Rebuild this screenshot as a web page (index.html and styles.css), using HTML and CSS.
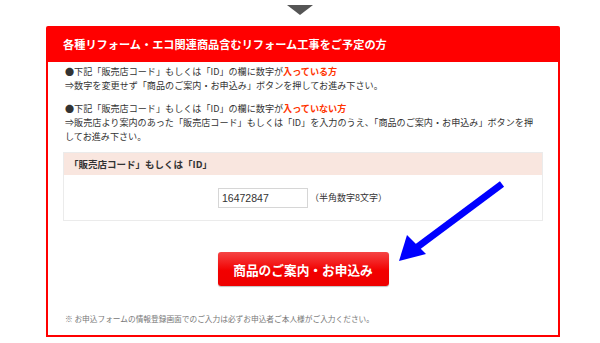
FILE: index.html
```html
<!DOCTYPE html>
<html lang="ja">
<head>
<meta charset="utf-8">
<title>リフォーム</title>
<link rel="stylesheet" href="styles.css">
</head>
<body>
<div class="page">
  <div class="down"></div>
  <div class="box">
    <div class="box-head">各種リフォーム・エコ関連商品含むリフォーム工事をご予定の方</div>
    <div class="box-body">
      <p class="para">●下記「販売店コード」もしくは「ID」の欄に数字が<span class="hl">入っている方</span><br>⇒数字を変更せず「商品のご案内・お申込み」ボタンを押してお進み下さい。</p>
      <p class="para">●下記「販売店コード」もしくは「ID」の欄に数字が<span class="hl">入っていない方</span><br>⇒販売店より案内のあった「販売店コード」もしくは「ID」を入力のうえ、「商品のご案内・お申込み」ボタンを押<br>してお進み下さい。</p>
      <div class="form">
        <div class="form-head">「販売店コード」もしくは「ID」</div>
        <div class="form-row">
          <input class="code" type="text" value="16472847">
          <span class="hint">（半角数字8文字）</span>
        </div>
      </div>
      <div class="btn-wrap">
        <button class="btn" type="button">商品のご案内・お申込み</button>
      </div>
      <p class="note">※ お申込フォームの情報登録画面でのご入力は必ずお申込者ご本人様がご入力ください。</p>
    </div>
  </div>
  <svg class="pointer" width="120" height="95" viewBox="0 0 120 95">
    <line x1="112" y1="9" x2="22" y2="76" stroke="#0000ff" stroke-width="7"/>
    <polygon points="9,86 17,60 36,79" fill="#0000ff"/>
  </svg>
</div>
</body>
</html>
```

FILE: styles.css
```css
* { box-sizing: border-box; }
html, body { margin: 0; padding: 0; background: #fff; }
body {
  font-family: "Noto Sans CJK JP", "Noto Sans", sans-serif;
  color: #333;
  width: 600px;
  height: 343px;
  overflow: hidden;
}
.page {
  position: relative;
  width: 600px;
  height: 343px;
}
.down {
  width: 0;
  height: 0;
  margin: 5px 0 0 287px;
  border-left: 13px solid transparent;
  border-right: 13px solid transparent;
  border-top: 10px solid #555;
}
.box {
  margin: 11px 0 0 46px;
  width: 514px;
  border: 2px solid #f00;
  border-radius: 2px 2px 0 0;
  height: 311px;
}
.box-head {
  background: #f00;
  color: #fff;
  font-weight: bold;
  font-size: 11.2px;
  height: 35px;
  line-height: 34px;
  padding-left: 15px;
  margin-top: -1px;
}
.box-body {
  padding: 2px 15px 0;
}
.para {
  margin: 0 0 9px;
  font-size: 9.1px;
  line-height: 14px;
  padding-left: 2px;
}
.hl { color: #ff3300; font-weight: bold; }
.form {
  margin-top: 6px;
  border: 1px solid #ebebeb;
}
.form-head {
  background: #f9e6df;
  height: 22px;
  line-height: 22px;
  font-size: 9.5px;
  font-weight: bold;
  padding-left: 5px;
}
.form-row {
  height: 45px;
  display: flex;
  align-items: center;
  padding-left: 154px;
  gap: 2px;
}
.code {
  width: 90px;
  height: 20px;
  border: 1px solid #d6d6d6;
  font-family: "Liberation Sans", sans-serif;
  font-size: 10.5px;
  color: #333;
  padding: 0 3px;
  margin: 0;
  outline: none;
}
.hint { font-size: 9px; }
.btn-wrap {
  display: flex;
  justify-content: center;
  margin-top: 31px;
}
.btn {
  width: 171px;
  height: 34px;
  border: none;
  border-radius: 3px;
  background: linear-gradient(#f54545, #f20000 55%, #ee0000);
  box-shadow: 0 1px 1px rgba(0,0,0,0.25);
  color: #fff;
  font-family: "Noto Sans CJK JP", sans-serif;
  font-weight: bold;
  font-size: 12.7px;
  padding: 0;
}
.note {
  margin: 27px 0 0;
  font-size: 7.7px;
  color: #777;
  padding-left: 2px;
}
.pointer {
  position: absolute;
  left: 390px;
  top: 170px;
}
```
